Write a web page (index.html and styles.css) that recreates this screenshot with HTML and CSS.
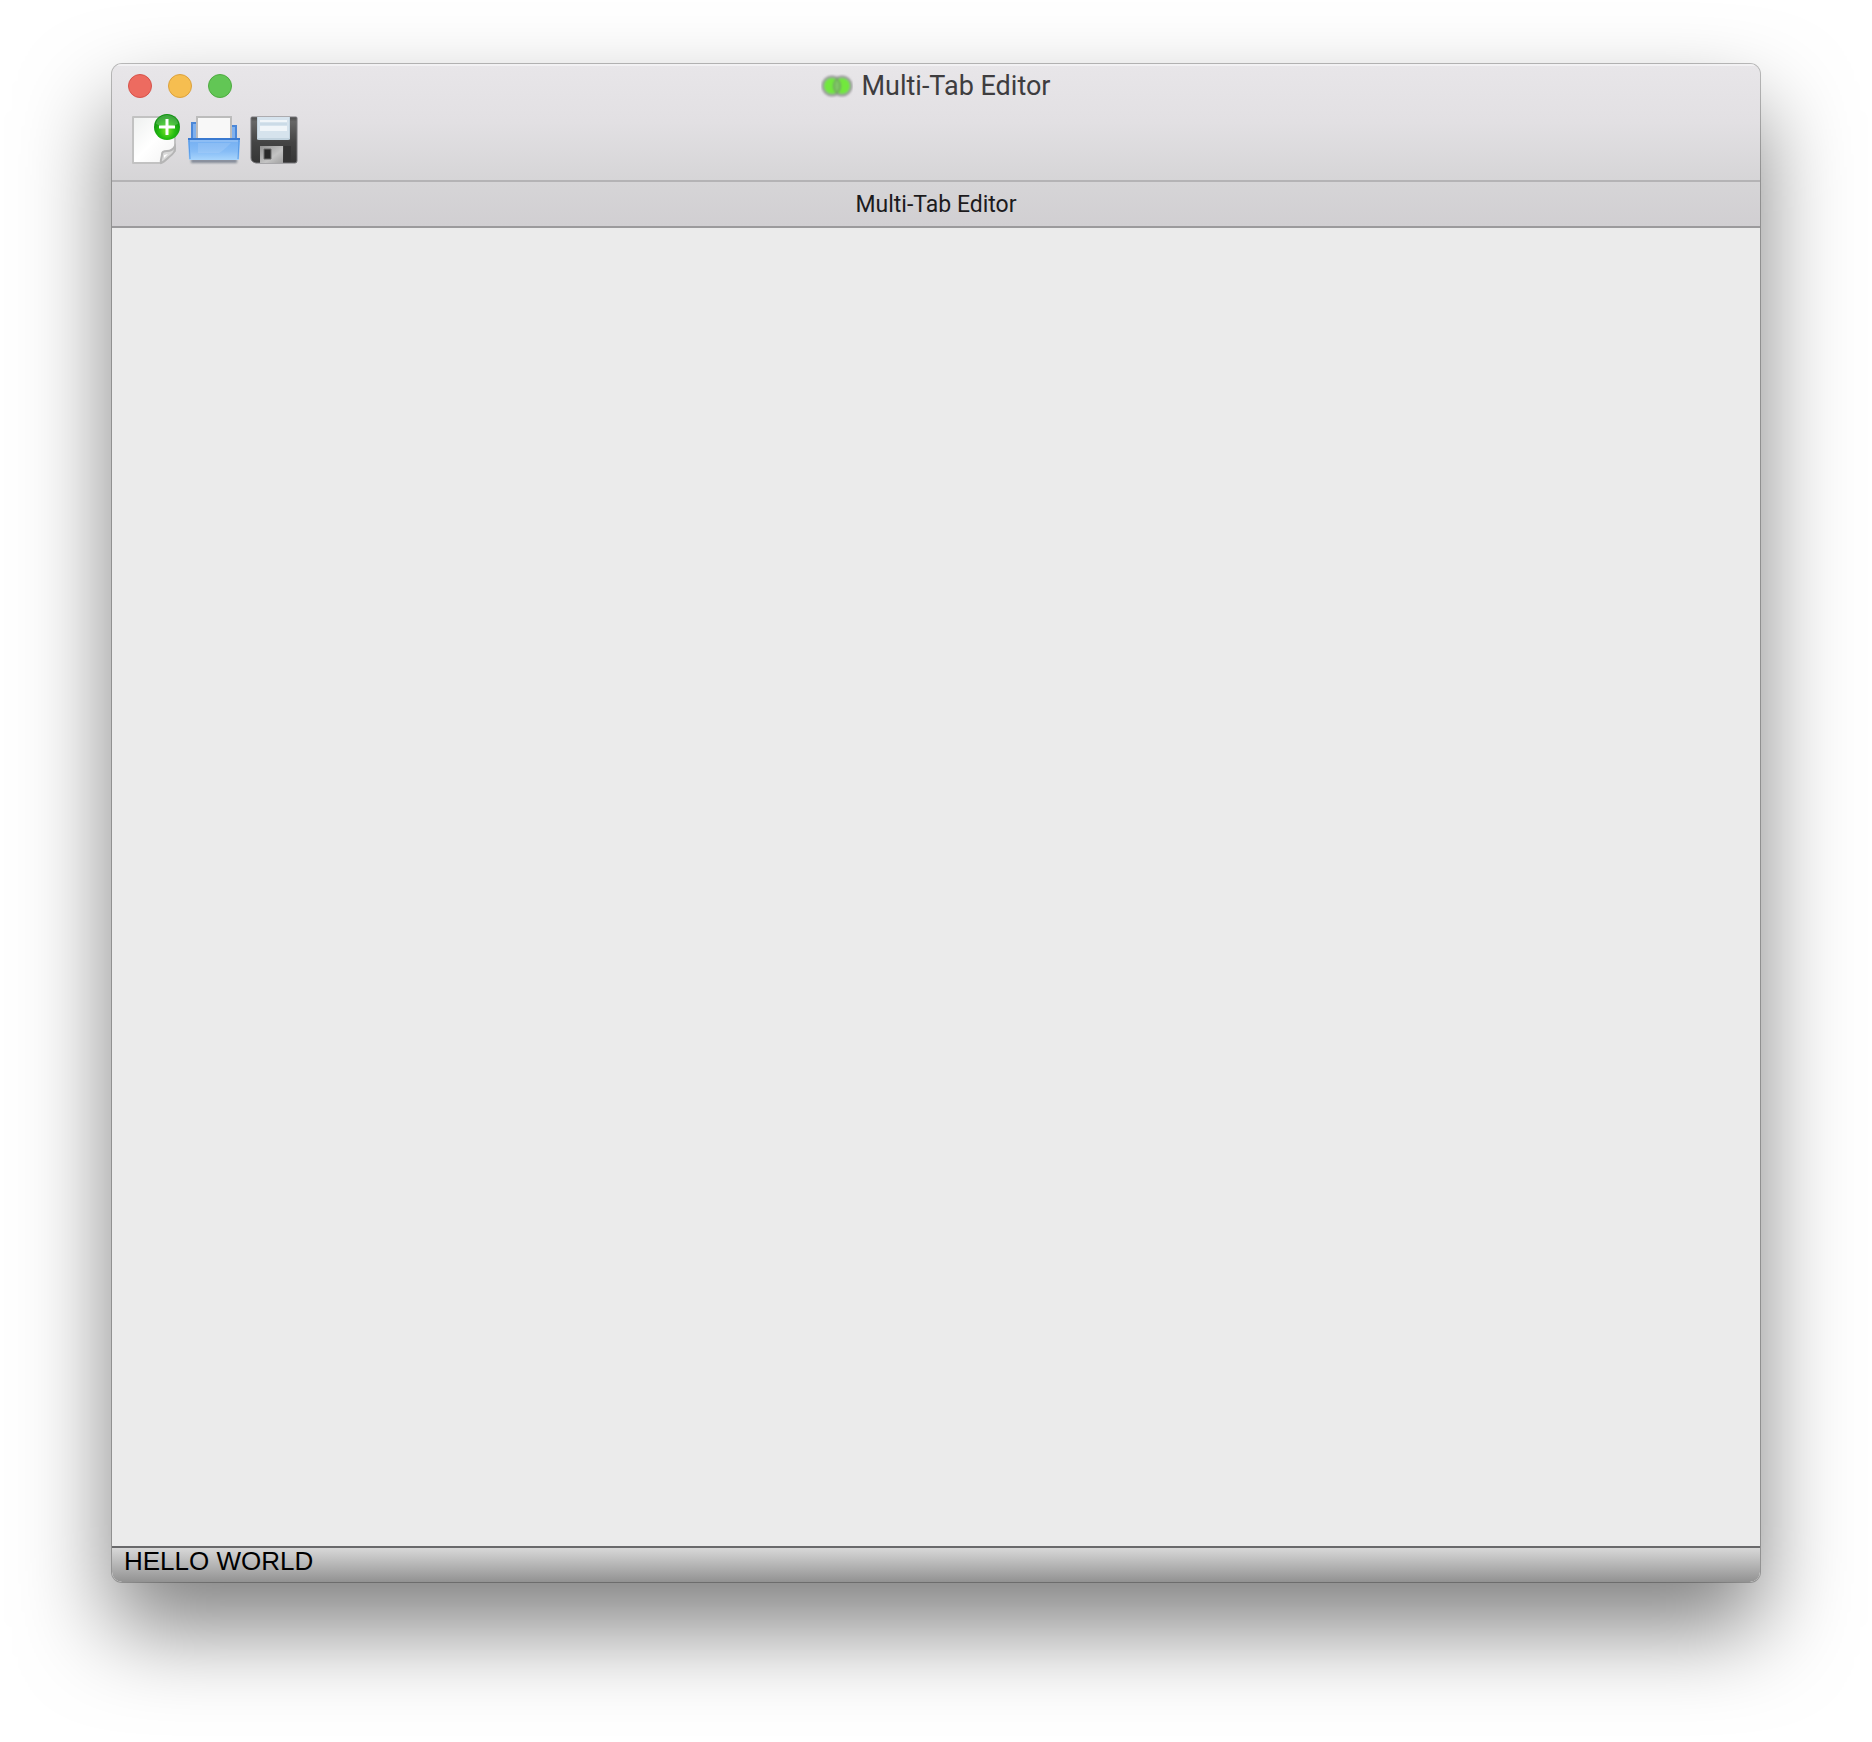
FILE: index.html
```html
<!DOCTYPE html>
<html lang="en">
<head>
    <meta charset="UTF-8">
    <meta name="viewport" content="width=device-width, initial-scale=1.0">
    <title>Multi-Tab Editor</title>
    <link rel="stylesheet" href="styles.css">
</head>
<body>
    <div class="window">
        <header class="window-header">
            <div class="title-bar">
                <div class="window-controls">
                    <button class="control close" aria-label="Close"></button>
                    <button class="control minimize" aria-label="Minimize"></button>
                    <button class="control zoom" aria-label="Zoom"></button>
                </div>
                <h1 class="title">
                    <svg class="title-icon" width="32" height="24" viewBox="0 0 32 24">
                        <defs>
                            <filter id="soft" x="-20%" y="-20%" width="140%" height="140%"><feGaussianBlur stdDeviation="0.9"/></filter>
                        </defs>
                        <g filter="url(#soft)">
                            <circle cx="11" cy="12" r="10.5" fill="#999"/>
                            <circle cx="21" cy="12" r="10.5" fill="#999"/>
                            <circle cx="11" cy="12" r="8" fill="#72e83c"/>
                            <circle cx="21" cy="12" r="8" fill="#72e83c"/>
                            <path d="M16 5a9 9 0 0 0 0 14a9 9 0 0 0 0-14z" fill="#80c566" stroke="#6fa35c" stroke-width="1.6"/>
                        </g>
                    </svg>
                    Multi-Tab Editor
                </h1>
            </div>

            <div class="toolbar">
                <!-- New file -->
                <button class="tool" aria-label="New">
                    <svg width="52" height="52" viewBox="0 0 52 52">
                        <defs>
                            <linearGradient id="page" x1="0" y1="0" x2="1" y2="1">
                                <stop offset="0" stop-color="#eef0ef"/>
                                <stop offset="0.5" stop-color="#fff"/>
                                <stop offset="1" stop-color="#f2f2f2"/>
                            </linearGradient>
                            <radialGradient id="plus" cx="0.5" cy="0.65" r="0.55">
                                <stop offset="0" stop-color="#7be52a"/>
                                <stop offset="0.55" stop-color="#25bd10"/>
                                <stop offset="1" stop-color="#109310"/>
                            </radialGradient>
                        </defs>
                        <path d="M5 3h42v34L32 49H5z" fill="url(#page)" stroke="#c2c2c2" stroke-width="2" stroke-linejoin="round"/>
                        <path d="M33 49c-1-3 1-5 1-9c0-2 2-3 5-3c3 0 6-1 8-5c1 5-3 9-6 11c-2 2-5 5-8 6z" fill="#d9d9d9" stroke="#b5b5b5" stroke-width="2"/>
                        <path d="M36 44v-3l4-1z" fill="#fff"/>
                        <circle cx="39" cy="13" r="13" fill="url(#plus)"/>
                        <path d="M28 10a11 9 0 0 1 22 0q-11 5-22 0z" fill="#fff" opacity="0.2"/>
                        <path d="M39 5v16M31 13h16" stroke="#fff" stroke-width="3"/>
                    </svg>
                </button>
                <!-- Open file -->
                <button class="tool" aria-label="Open">
                    <svg width="52" height="52" viewBox="0 0 52 52">
                        <defs>
                            <linearGradient id="tray" x1="0" y1="0" x2="0" y2="1">
                                <stop offset="0" stop-color="#4c8edf"/>
                                <stop offset="0.2" stop-color="#78b2f3"/>
                                <stop offset="0.6" stop-color="#86bcf6"/>
                                <stop offset="1" stop-color="#a8d5fc"/>
                            </linearGradient>
                            <filter id="shade" x="-20%" y="-100%" width="140%" height="300%"><feGaussianBlur stdDeviation="1"/></filter>
                        </defs>
                        <path d="M3 45h46v4H3z" fill="#5e6b7c" opacity="0.7" filter="url(#shade)"/>
                        <path d="M4 9h8v18H4zM42 12h6v15h-6z" fill="#7fb0ee" stroke="#4b87d8" stroke-width="2"/>
                        <path d="M9 3h34v25H9z" fill="#f8f8f8" stroke="#bcbcbc" stroke-width="2"/>
                        <path d="M0 24h52l-1 22H1z" fill="url(#tray)"/>
                        <path d="M0 25h52" stroke="#3979d0" stroke-width="2"/>
                        <path d="M2 27h48" stroke="#8dbdf4" stroke-width="2"/>
                        <path d="M10 39V29h33q-8 8-12 10z" fill="#fff" opacity="0.12"/>
                        <path d="M1 27l1 18M51 27l-1 18" stroke="#579be8" stroke-width="1"/>
                    </svg>
                </button>
                <!-- Save file -->
                <button class="tool" aria-label="Save">
                    <svg width="52" height="52" viewBox="0 0 52 52">
                        <defs>
                            <linearGradient id="disk" x1="0" y1="0" x2="0" y2="1">
                                <stop offset="0" stop-color="#494949"/>
                                <stop offset="0.1" stop-color="#666"/>
                                <stop offset="0.55" stop-color="#444"/>
                                <stop offset="1" stop-color="#353535"/>
                            </linearGradient>
                            <linearGradient id="shutter" x1="0" y1="0" x2="1" y2="1">
                                <stop offset="0" stop-color="#929292"/>
                                <stop offset="0.6" stop-color="#c4c4c4"/>
                                <stop offset="1" stop-color="#a0a0a0"/>
                            </linearGradient>
                        </defs>
                        <path d="M4 3h44q1 0 1 1v43q0 2-2 2H8q-5-1-5-5V4q0-1 1-1z" fill="url(#disk)" stroke="#77777a" stroke-width="1"/>
                        <path d="M9 3h33v22q0 1-2 1H11q-2 0-2-1z" fill="#c2d3df"/>
                        <path d="M10 3h31v21H10z" fill="#d6e3ed"/>
                        <path d="M12 6h27v2H12zM12 12h27v5H12z" fill="#f0f5f9"/>
                        <path d="M12 9h27v2H12z" fill="#cbdbe7"/>
                        <path d="M12 32h23v17H12z" fill="url(#shutter)"/>
                        <path d="M36 32h7v16h-7z" fill="#343434"/>
                        <path d="M16 35h7v10h-7z" fill="#292929" stroke="#6a6a6a" stroke-width="1"/>
                    </svg>
                </button>
            </div>
        </header>

        <div class="tab-title">Multi-Tab Editor</div>

        <main class="content"></main>

        <footer class="status-bar">HELLO WORLD</footer>
    </div>
</body>
</html>
```
FILE: styles.css
```css
* {
    box-sizing: border-box;
}

body {
    font-family: Roboto, sans-serif;
    background-color: white;
    display: flex;
    min-height: 100vh;
    margin: 0;
    padding: 64px 112px 160px;
}

.window {
    flex: 1;
    display: flex;
    flex-direction: column;
    border-radius: 10px;
    background-color: #ebebeb;
    box-shadow: 0 0 0 1px rgba(0, 0, 0, 0.25), 0 46px 90px rgba(0, 0, 0, 0.5);
    overflow: hidden;
}

/* Header */
.window-header {
    height: 118px;
    background: linear-gradient(#e8e6e9, #e2e0e3 50%, #d6d5d7);
    border-bottom: 2px solid #b4b3b5;
    box-shadow: inset 0 2px 0 #f2f1f3;
}

.title-bar {
    display: grid;
    grid-template-columns: 1fr auto 1fr;
    align-items: center;
    height: 44px;
    padding: 0 16px;
}

.window-controls {
    display: flex;
    gap: 16px;
}

.control {
    width: 24px;
    height: 24px;
    padding: 0;
    border: 1px solid;
    border-radius: 50%;
}

.close {
    background-color: #ed6b60;
    border-color: #d6524a;
}

.minimize {
    background-color: #f6be50;
    border-color: #dba13c;
}

.zoom {
    background-color: #62c655;
    border-color: #4eaa40;
}

.title {
    display: flex;
    align-items: center;
    gap: 8px;
    margin: 0;
    font-size: 27px;
    font-weight: normal;
    color: #3e3d3f;
}

/* Toolbar */
.toolbar {
    display: flex;
    gap: 8px;
    padding: 6px 16px;
}

.tool {
    padding: 0;
    border: none;
    background: none;
}

.tool svg {
    display: block;
}

.tab-title {
    height: 46px;
    line-height: 46px;
    text-align: center;
    font-size: 23px;
    color: #1c1b1d;
    background: linear-gradient(#d6d5d7, #d1cfd2);
    border-bottom: 2px solid #9b9a9c;
}

.content {
    flex: 1;
}

/* Status bar */
.status-bar {
    height: 36px;
    padding: 0 12px;
    font-family: "Liberation Sans", Arial, sans-serif;
    font-size: 26px;
    line-height: 26px;
    color: black;
    background: linear-gradient(#d8d8d8, #929292);
    border-top: 2px solid #69696b;
    border-radius: 0 0 10px 10px;
}
```
